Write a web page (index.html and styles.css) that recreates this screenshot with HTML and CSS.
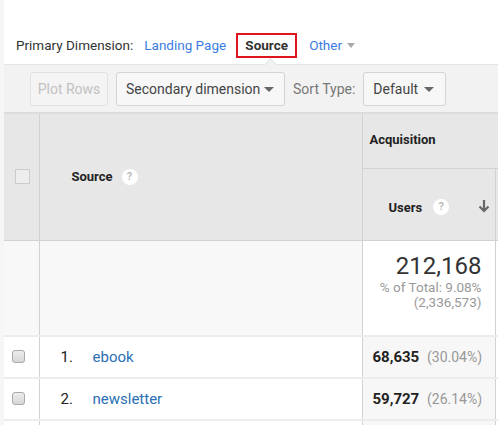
FILE: index.html
```html
<!DOCTYPE html>
<html>
<head>
<meta charset="utf-8">
<link rel="stylesheet" href="styles.css">
</head>
<body>
<div class="page">
  <div class="dimbar">
    <span class="dim-label">Primary Dimension:</span>
    <a class="dim-link">Landing Page</a>
    <span class="dim-active">Source</span>
    <a class="dim-link other">Other <span class="caret-sm"></span></a>
  </div>
  <div class="toolbar">
    <span class="notch"></span>
    <button class="btn disabled">Plot Rows</button>
    <button class="btn select sec">Secondary dimension <span class="caret"></span></button>
    <span class="sort-label">Sort Type:</span>
    <button class="btn select def">Default <span class="caret"></span></button>
  </div>
  <table class="grid">
    <colgroup>
      <col class="c-check"><col class="c-src"><col class="c-users"><col class="c-more">
    </colgroup>
    <thead>
      <tr class="h1">
        <th rowspan="2" class="th-check"><span class="hbox"></span></th>
        <th rowspan="2" class="th-src"><span class="th-inner">Source <span class="help">?</span></span></th>
        <th colspan="2" class="th-group">Acquisition</th>
      </tr>
      <tr class="h2">
        <th class="th-users"><span class="th-inner users-inner"><span>Users</span> <span class="help">?</span><span class="arrow"><svg width="12" height="14" viewBox="0 0 12 14"><path d="M6 1 V12 M1.5 7.5 L6 12 L10.5 7.5" fill="none" stroke="#666" stroke-width="2.2"/></svg></span></span></th>
        <th class="th-more"></th>
      </tr>
    </thead>
    <tbody>
      <tr class="totals">
        <td class="t-left"></td>
        <td class="t-left"></td>
        <td class="t-users">
          <div class="big">212,168</div>
          <div class="sub">% of Total: 9.08%</div>
          <div class="sub">(2,336,573)</div>
        </td>
        <td class="t-more"></td>
      </tr>
      <tr class="row">
        <td class="r-check"><span class="cbox"></span></td>
        <td class="r-src"><span class="num">1.</span><a class="src-link">ebook</a></td>
        <td class="r-users"><b>68,635</b> <span class="pct">(30.04%)</span></td>
        <td class="r-more"></td>
      </tr>
      <tr class="row">
        <td class="r-check"><span class="cbox"></span></td>
        <td class="r-src"><span class="num">2.</span><a class="src-link">newsletter</a></td>
        <td class="r-users"><b>59,727</b> <span class="pct">(26.14%)</span></td>
        <td class="r-more"></td>
      </tr>
      <tr class="row">
        <td class="r-check"></td>
        <td class="r-src"></td>
        <td class="r-users"></td>
        <td class="r-more"></td>
      </tr>
    </tbody>
  </table>
</div>
</body>
</html>
```

FILE: styles.css
```css
html, body {
  margin: 0;
  padding: 0;
}
body {
  background: #f6f6f6;
  font-family: Roboto, "Liberation Sans", Arial, sans-serif;
  color: #333;
  overflow: hidden;
  width: 498px;
  height: 425px;
}
.page {
  margin-left: 4px;
  width: 494px;
  background: #fff;
  overflow: hidden;
  height: 425px;
}
.dimbar {
  height: 64px;
  box-sizing: border-box;
  padding: 33px 0 0 12px;
  display: flex;
  align-items: flex-start;
  font-size: 13.5px;
  background: #fff;
}
.dimbar > * {
  height: 25px;
  line-height: 25px;
}
.dim-label {
  color: #333;
  margin-right: 11px;
}
.dim-link {
  color: #3b7de3;
  margin-right: 10px;
}
.dim-active {
  box-sizing: border-box;
  width: 61px;
  border: 2px solid #e0141e;
  line-height: 21px;
  text-align: center;
  font-weight: bold;
  color: #333;
  margin-right: 12px;
}
.caret-sm {
  display: inline-block;
  width: 0;
  height: 0;
  border-left: 4.5px solid transparent;
  border-right: 4.5px solid transparent;
  border-top: 5px solid #aaa;
  vertical-align: middle;
  margin-left: 2px;
  margin-top: -2px;
}
.toolbar {
  position: relative;
  height: 48px;
  box-sizing: border-box;
  border-top: 1px solid #e4e4e4;
  background: #f2f2f2;
  display: flex;
  align-items: center;
  gap: 8px;
  padding-left: 26px;
}
.notch {
  position: absolute;
  left: 262px;
  top: -5px;
  width: 8px;
  height: 8px;
  background: #f2f2f2;
  border-left: 1px solid #e4e4e4;
  border-top: 1px solid #e4e4e4;
  transform: rotate(45deg);
}
.btn {
  height: 34px;
  box-sizing: border-box;
  border: 1px solid #d4d4d4;
  border-radius: 3px;
  background: #f7f7f7;
  font-family: Roboto, "Liberation Sans", Arial, sans-serif;
  font-size: 14px;
  color: #444;
  padding: 0 9px;
  display: flex;
  align-items: center;
  margin-top: 1px;
  white-space: nowrap;
}
.btn.disabled {
  width: 78px;
  padding: 0;
  justify-content: center;
  color: #c2c2c2;
  border-color: #e2e2e2;
  background: #f4f4f4;
}
.btn.sec {
  width: 169px;
  justify-content: space-between;
  padding-right: 10px;
}
.btn.def {
  width: 83px;
  justify-content: space-between;
  padding-right: 11px;
}
.caret {
  display: inline-block;
  width: 0;
  height: 0;
  border-left: 5px solid transparent;
  border-right: 5px solid transparent;
  border-top: 5px solid #666;
}
.sort-label {
  color: #777;
  font-size: 14px;
  margin-top: 1px;
}
.grid {
  border-collapse: collapse;
  table-layout: fixed;
  width: 594px;
  font-size: 13px;
}
.c-check { width: 35px; }
.c-src { width: 323px; }
.c-users { width: 133px; }
.c-more { width: 103px; }
.grid th {
  background: #e7e7e7;
  font-weight: bold;
  color: #222;
  text-align: left;
  padding: 0;
  border: 1px solid #d2d2d2;
}
.grid tr.h1 th { border-top: 2px solid #dcdcdc; }
.h1 { height: 55px; }
.h2 { height: 72px; }
.th-check { border-left: none !important; text-align: center !important; }
.hbox {
  display: inline-block;
  width: 15px;
  height: 15px;
  box-sizing: border-box;
  border: 1px solid #cbcbcb;
  background: #ededed;
  vertical-align: middle;
  margin-left: 2px;
  margin-top: -2px;
}
.th-src { padding-left: 32px !important; }
.th-inner {
  display: flex;
  align-items: center;
  gap: 9px;
}
.help {
  display: inline-block;
  width: 16px;
  height: 16px;
  border-radius: 50%;
  background: #fff;
  color: #bbb;
  font-size: 11px;
  font-weight: bold;
  line-height: 16px;
  text-align: center;
}
.th-group { padding-left: 7px !important; vertical-align: middle; padding-bottom: 3px !important; }
.th-users { padding: 6px 5px 0 26px !important; }
.users-inner { gap: 0; }
.users-inner .help { margin-left: 11px; }
.arrow {
  margin-left: auto;
  display: flex;
  margin-top: -3px;
}
.grid td {
  padding: 0;
  border-bottom: 2px solid #ececec;
}
.totals { height: 96px; }
.t-left { background: #f8f8f8; }
.totals td:first-child,
.row td:first-child {
  border-right: 1px solid #d2d2d2;
}
.t-users {
  background: #fff;
  text-align: right;
  padding-right: 13px !important;
  vertical-align: top;
  padding-top: 11px !important;
  border-left: 1px solid #d2d2d2;
  border-right: 1px solid #d2d2d2;
}
.t-more { background: #fff; }
.big {
  font-size: 24px;
  color: #333;
  line-height: 28px;
}
.sub {
  font-size: 13.5px;
  color: #999;
  line-height: 15px;
}
.sub:first-of-type { margin-top: 0px; }
.row { height: 42px; }
.row td { background: #fff; }
.r-check { text-align: center; }
.cbox {
  display: inline-block;
  width: 13px;
  height: 13px;
  box-sizing: border-box;
  border: 1px solid #aaa;
  border-radius: 3px;
  background: linear-gradient(#ededed, #d6d6d6);
  vertical-align: middle;
  margin-left: -6px;
  margin-top: -4px;
}
.r-src {
  font-size: 15px;
  color: #222;
}
.num {
  display: inline-block;
  width: 32px;
  margin-left: 21px;
}
.src-link { color: #2a70b5; }
.r-users {
  background: #f7f7f7 !important;
  padding-left: 10px !important;
  font-size: 15px;
  color: #222;
  border-left: 1px solid #d2d2d2;
  border-right: 1px solid #d2d2d2;
}
.r-users b { font-weight: bold; }
.pct { color: #999; font-size: 14px; margin-left: 4px; }
```
